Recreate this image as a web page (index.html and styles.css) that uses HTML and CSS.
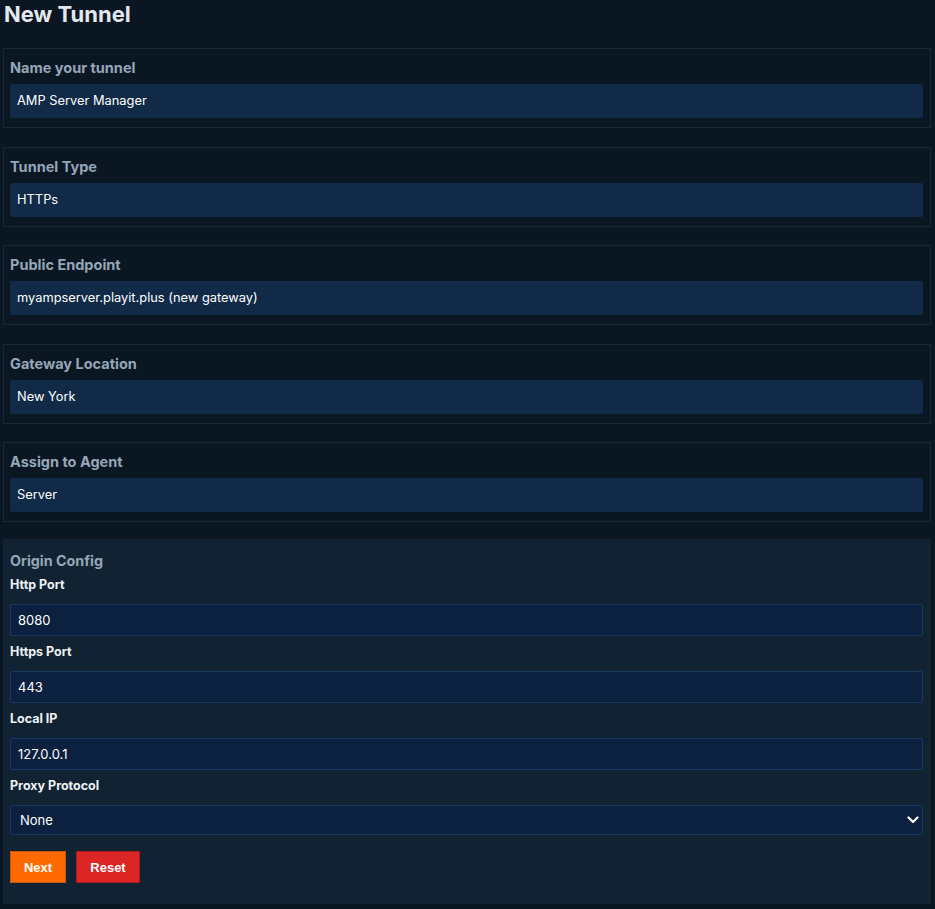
FILE: index.html
```html
<!DOCTYPE html>
<html lang="en">

<head>
    <meta charset="UTF-8">
    <meta name="viewport" content="width=device-width, initial-scale=1.0">
    <title>New Tunnel</title>
    <link rel="stylesheet" href="styles.css">
</head>

<body>
    <h1 class="page-title">New Tunnel</h1>

    <div class="field-card">
        <div class="field-label">Name your tunnel</div>
        <div class="field-value">AMP Server Manager</div>
    </div>

    <div class="field-card">
        <div class="field-label">Tunnel Type</div>
        <div class="field-value">HTTPs</div>
    </div>

    <div class="field-card">
        <div class="field-label">Public Endpoint</div>
        <div class="field-value">myampserver.playit.plus (new gateway)</div>
    </div>

    <div class="field-card">
        <div class="field-label">Gateway Location</div>
        <div class="field-value">New York</div>
    </div>

    <div class="field-card">
        <div class="field-label">Assign to Agent</div>
        <div class="field-value">Server</div>
    </div>

    <form class="origin">
        <div class="origin-title">Origin Config</div>

        <label class="origin-label" for="httpPort">Http Port</label>
        <input class="origin-input" type="text" id="httpPort" value="8080">

        <label class="origin-label" for="httpsPort">Https Port</label>
        <input class="origin-input" type="text" id="httpsPort" value="443">

        <label class="origin-label" for="localIp">Local IP</label>
        <input class="origin-input" type="text" id="localIp" value="127.0.0.1">

        <label class="origin-label" for="proxyProtocol">Proxy Protocol</label>
        <div class="select-wrap">
            <select class="origin-select" id="proxyProtocol">
                <option>None</option>
                <option>Proxy Protocol v1</option>
                <option>Proxy Protocol v2</option>
            </select>
            <svg class="select-arrow" width="12" height="8" viewBox="0 0 12 8">
                <path d="M1.5 1.5 L6 6 L10.5 1.5" fill="none" stroke="#fff" stroke-width="2.2" stroke-linecap="round" stroke-linejoin="round" />
            </svg>
        </div>

        <div class="actions">
            <button type="button" class="btn btn-next">Next</button>
            <button type="reset" class="btn btn-reset">Reset</button>
        </div>
    </form>
</body>

</html>
```

FILE: styles.css
```css
body {
    font-family: Inter, "Noto Sans", sans-serif;
    background-color: #0a1723;
    color: #fff;
    margin: 0;
    padding: 0 4px 4px 3px;
}

.page-title {
    font-size: 22px;
    line-height: 28px;
    font-weight: 700;
    color: #e3e8ee;
    margin: 0 0 20px 1px;
}

.field-card {
    border: 1px solid #16283a;
    padding: 8px 7px 9px 6px;
    margin-bottom: 18.5px;
}

.field-card:last-of-type {
    margin-bottom: 17px;
}

.field-label {
    font-size: 14.5px;
    line-height: 22px;
    font-weight: 700;
    color: #95a6b8;
    margin-bottom: 5px;
}

.field-value {
    background-color: #102a48;
    border-radius: 2px;
    height: 34px;
    line-height: 34px;
    padding: 0 7px;
    font-size: 12.85px;
    color: #fff;
}

.origin {
    background-color: #112332;
    padding: 12px 8px 21px 7px;
}

.origin-title {
    font-size: 14.3px;
    line-height: 20px;
    font-weight: 700;
    color: #95a6b8;
    margin-bottom: 5px;
}

.origin-label {
    display: block;
    font-size: 12.5px;
    line-height: 18px;
    font-weight: 700;
    color: #eef2f6;
    margin-bottom: 10px;
}

.origin-input,
.origin-select {
    display: block;
    width: 100%;
    box-sizing: border-box;
    height: 32px;
    margin: 0 0 7px;
    padding: 0 7px;
    background-color: #0c203f;
    border: 1px solid #183a5e;
    border-radius: 2px;
    color: #fff;
    font-family: Inter, "Noto Sans", sans-serif;
    font-size: 13px;
    outline: none;
}

.select-wrap {
    position: relative;
}

.origin-select {
    height: 30px;
    padding: 0 9px;
    margin-bottom: 16px;
    appearance: none;
    -webkit-appearance: none;
}

.select-arrow {
    position: absolute;
    right: 4px;
    top: 11px;
    pointer-events: none;
}

.actions {
    display: flex;
    gap: 10px;
}

.btn {
    height: 32px;
    padding: 0 12px;
    font-family: "Liberation Sans", Arial, sans-serif;
    font-size: 13px;
    font-weight: 700;
    color: #fff;
    border-radius: 0;
    cursor: pointer;
}

.btn-next {
    width: 56px;
    background-color: #ff6a00;
    border: 1px solid #c9540a;
}

.btn-reset {
    width: 64px;
    background-color: #dc2626;
    border: 1px solid #a71d1d;
}
```
